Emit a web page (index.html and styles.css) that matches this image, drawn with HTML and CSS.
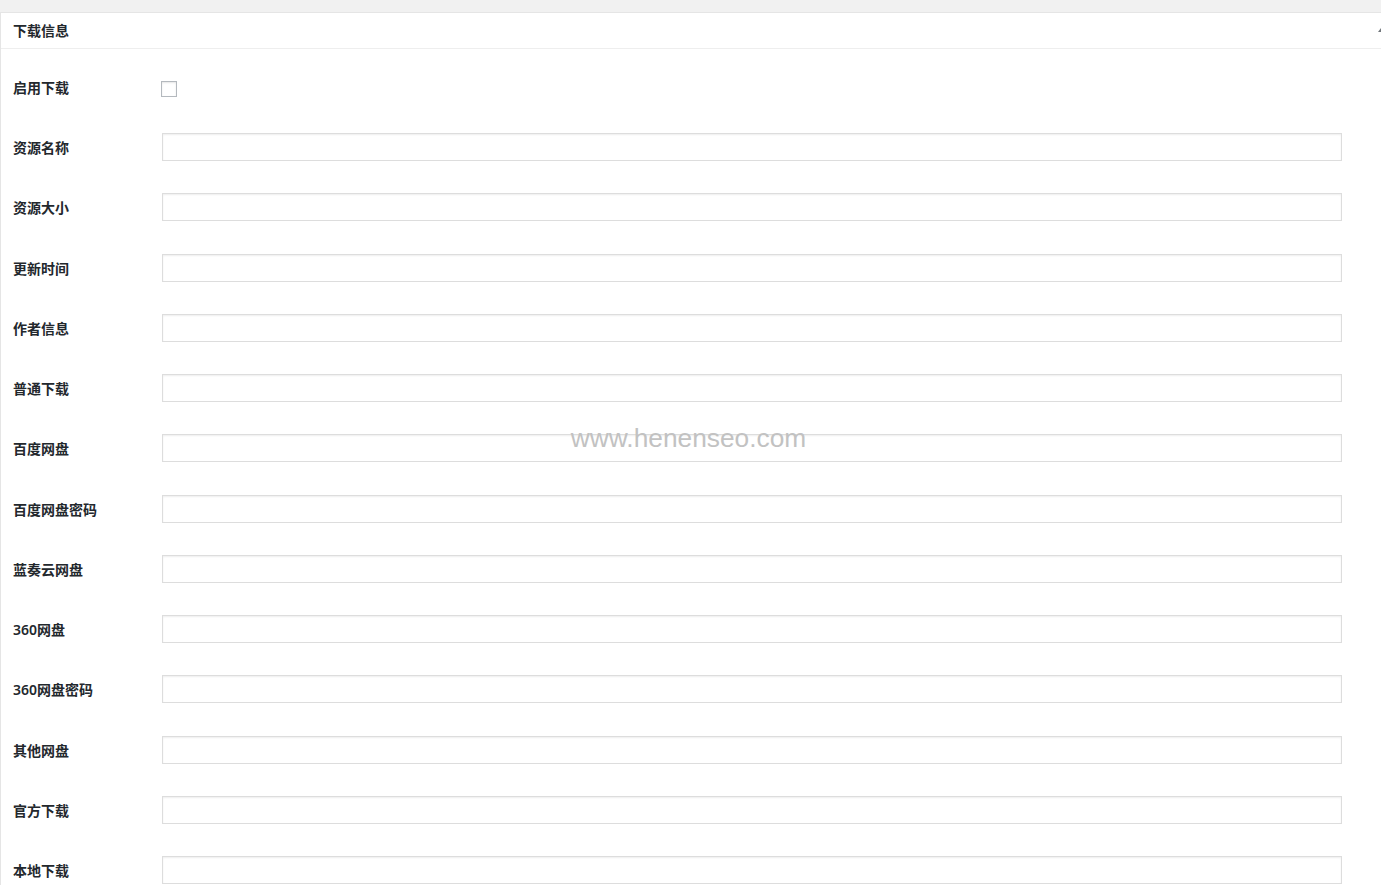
FILE: index.html
```html
<!DOCTYPE html>
<html lang="zh-CN">
<head>
    <meta charset="UTF-8">
    <meta name="viewport" content="width=device-width, initial-scale=1.0">
    <title>下载信息</title>
    <link rel="stylesheet" href="styles.css">
</head>
<body>
    <div class="postbox">
        <div class="postbox-header">
            <h2 class="hndle">下载信息</h2>
            <span class="toggle-arrow"></span>
        </div>
        <div class="inside">
            <div class="field-row first">
                <label class="field-label" for="enable">启用下载</label>
                <input type="checkbox" id="enable" class="field-check">
            </div>
            <div class="field-row">
                <label class="field-label">资源名称</label>
                <input type="text" class="field-input">
            </div>
            <div class="field-row">
                <label class="field-label">资源大小</label>
                <input type="text" class="field-input">
            </div>
            <div class="field-row">
                <label class="field-label">更新时间</label>
                <input type="text" class="field-input">
            </div>
            <div class="field-row">
                <label class="field-label">作者信息</label>
                <input type="text" class="field-input">
            </div>
            <div class="field-row">
                <label class="field-label">普通下载</label>
                <input type="text" class="field-input">
            </div>
            <div class="field-row">
                <label class="field-label">百度网盘</label>
                <input type="text" class="field-input">
            </div>
            <div class="field-row">
                <label class="field-label">百度网盘密码</label>
                <input type="text" class="field-input">
            </div>
            <div class="field-row">
                <label class="field-label">蓝奏云网盘</label>
                <input type="text" class="field-input">
            </div>
            <div class="field-row">
                <label class="field-label">360网盘</label>
                <input type="text" class="field-input">
            </div>
            <div class="field-row">
                <label class="field-label">360网盘密码</label>
                <input type="text" class="field-input">
            </div>
            <div class="field-row">
                <label class="field-label">其他网盘</label>
                <input type="text" class="field-input">
            </div>
            <div class="field-row">
                <label class="field-label">官方下载</label>
                <input type="text" class="field-input">
            </div>
            <div class="field-row">
                <label class="field-label">本地下载</label>
                <input type="text" class="field-input">
            </div>
        </div>
    </div>

    <div class="watermark">www.henenseo.com</div>
</body>
</html>
```

FILE: styles.css
```css
html, body {
    margin: 0;
    padding: 0;
}
body {
    background-color: #f1f1f1;
    font-family: "Noto Sans", "Noto Sans CJK SC", sans-serif;
    color: #23282d;
    height: 885px;
    overflow: hidden;
}
.postbox {
    margin-top: 12px;
    background-color: #fff;
    border: 1px solid #e5e5e5;
    border-right: none;
    height: 900px;
}
.postbox-header {
    position: relative;
    height: 35px;
    border-bottom: 1px solid #eee;
    display: flex;
    align-items: center;
}
.hndle {
    margin: 0;
    padding: 0 12px;
    font-size: 14px;
    font-weight: 600;
    line-height: 18px;
    margin-top: 1px;
}
.toggle-arrow {
    position: absolute;
    right: -3px;
    top: 15px;
    width: 0;
    height: 0;
    border-left: 3px solid transparent;
    border-right: 3px solid transparent;
    border-bottom: 4px solid #72777c;
}
.inside {
    padding: 0 0 0 12px;
}
.field-row {
    display: flex;
    align-items: flex-start;
    height: 60.25px;
}
.field-row.first {
    height: 69px;
}
.field-label {
    width: 149px;
    flex-shrink: 0;
    font-size: 14px;
    font-weight: 600;
    line-height: 18px;
    padding-top: 21px;
}
.field-row.first .field-label {
    padding-top: 30px;
}
.field-check {
    margin: 32px 0 0 -1px;
    width: 16px;
    height: 16px;
    box-sizing: border-box;
    appearance: none;
    -webkit-appearance: none;
    border: 1px solid #b4b9be;
    background: #fff;
    box-shadow: inset 0 1px 2px rgba(0, 0, 0, 0.1);
}
.field-input {
    margin-top: 15px;
    width: 1180px;
    height: 28px;
    box-sizing: border-box;
    border: 1px solid #ddd;
    box-shadow: inset 0 1px 2px rgba(0, 0, 0, 0.07);
    background: #fff;
    padding: 3px 5px;
    font-size: 14px;
}
.watermark {
    position: absolute;
    left: 0;
    top: 423px;
    width: 1377px;
    text-align: center;
    font-family: "Liberation Sans", Arial, sans-serif;
    font-size: 26.3px;
    line-height: 30px;
    color: #c2c2c2;
}
```
